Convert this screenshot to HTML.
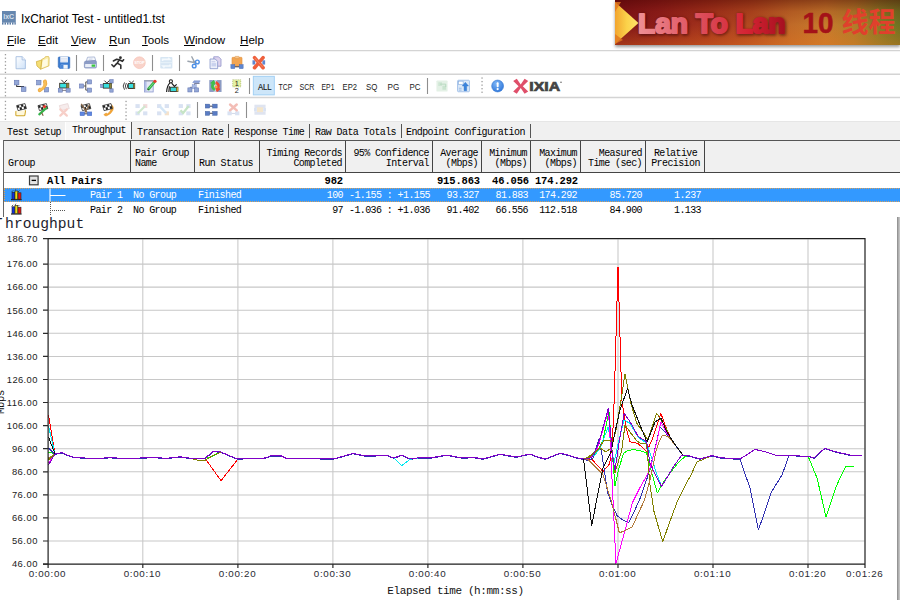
<!DOCTYPE html>
<html lang="en">
<head>
<meta charset="utf-8">
<title>IxChariot Test - untitled1.tst</title>
<style>
html,body{margin:0;padding:0;}
body{width:900px;height:600px;overflow:hidden;background:#fff;position:relative;font-family:"Liberation Sans",sans-serif;color:#000;}
.abs{position:absolute;}
.mono{font-family:"Liberation Mono","Noto Sans CJK SC",monospace;}
#title{left:21px;top:10.5px;font-size:11.9px;line-height:16px;white-space:nowrap;color:#000;}
#menu{left:0;top:30px;height:20px;width:900px;}
#menu span{position:absolute;top:2px;font-size:11.6px;line-height:16px;white-space:nowrap;}
#menu u{text-decoration:underline;text-underline-offset:1px;}
#tabs{left:0;top:122px;width:900px;height:18px;background:#f0f0f0;}
.tab{position:absolute;top:5px;font-size:10px;letter-spacing:-0.6px;line-height:12px;white-space:nowrap;}
.tsep{position:absolute;top:2px;width:1px;height:14px;background:#555;}
#thead{left:4px;top:140px;width:896px;height:33px;background:#f0f0f0;border-top:1px solid #555;border-bottom:1px solid #444;box-sizing:border-box;}
.hc{position:absolute;top:0;height:32px;border-right:1.5px solid #444;box-sizing:border-box;font-size:10px;letter-spacing:-0.6px;line-height:10px;white-space:nowrap;}
.hc div{position:absolute;left:4px;right:3px;bottom:4px;}
.hc.r div{text-align:right;}
.hc.c div{text-align:center;}
.row{position:absolute;left:4px;width:896px;font-size:10px;letter-spacing:-0.6px;line-height:14.5px;white-space:nowrap;}
.row span{position:absolute;top:0;}
.row .r{text-align:right;}
.bold{font-weight:bold;}
</style>
</head>
<body>
<!-- title bar -->
<svg class="abs" style="left:2px;top:11px" width="14" height="14" viewBox="0 0 14 14">
 <rect x="0" y="0" width="13.800" height="11.600" fill="#6687af"/>
 <g fill="#5d7ea8"><rect x="0" y="11.400" width="1.500" height="2.200"/><rect x="2.500" y="11.400" width="1.500" height="2.200"/><rect x="5" y="11.400" width="1.500" height="2.200"/><rect x="7.500" y="11.400" width="1.500" height="2.200"/><rect x="10" y="11.400" width="1.500" height="2.200"/><rect x="12.400" y="11.400" width="1.400" height="2.200"/></g>
 <text x="1.200" y="8" font-family="Liberation Sans, sans-serif" font-size="7.600" font-weight="bold" fill="#d6e0ec" textLength="11" lengthAdjust="spacingAndGlyphs">IxC</text>
</svg>
<div id="title" class="abs">IxChariot Test - untitled1.tst</div>

<!-- menu bar -->
<div id="menu" class="abs">
 <span style="left:7px"><u>F</u>ile</span>
 <span style="left:38px"><u>E</u>dit</span>
 <span style="left:71px"><u>V</u>iew</span>
 <span style="left:109px"><u>R</u>un</span>
 <span style="left:142px"><u>T</u>ools</span>
 <span style="left:184px"><u>W</u>indow</span>
 <span style="left:240px"><u>H</u>elp</span>
</div>

<!-- TOOLBARS -->
<!--TB-START-->
<svg id="tb" class="abs" style="left:0;top:50px" width="900" height="73" viewBox="0 50 900 73">
<defs><linearGradient id="gp" x1="0" y1="0" x2="1" y2="1"><stop offset="0" stop-color="#ffffff"/><stop offset="1" stop-color="#cfe2f8"/></linearGradient><radialGradient id="gi" cx=".4" cy=".3" r=".8"><stop offset="0" stop-color="#7db6f6"/><stop offset="1" stop-color="#2a72d8"/></radialGradient></defs>
<path d="M0 50.500H900M0 74.300H900M0 97.500H900" stroke="#d4d4d4" stroke-width="1.400"/><path d="M0 121.500H900" stroke="#e6e6e6" stroke-width="1.200"/>
<rect x="4.8" y="54.00" width="1.300" height="1.300" fill="#9c9c9c"/><rect x="4.8" y="57.55" width="1.300" height="1.300" fill="#9c9c9c"/><rect x="4.8" y="61.10" width="1.300" height="1.300" fill="#9c9c9c"/><rect x="4.8" y="64.65" width="1.300" height="1.300" fill="#9c9c9c"/><rect x="4.8" y="68.20" width="1.300" height="1.300" fill="#9c9c9c"/><rect x="4.8" y="71.75" width="1.300" height="1.300" fill="#9c9c9c"/><rect x="4.8" y="77.40" width="1.300" height="1.300" fill="#9c9c9c"/><rect x="4.8" y="80.95" width="1.300" height="1.300" fill="#9c9c9c"/><rect x="4.8" y="84.50" width="1.300" height="1.300" fill="#9c9c9c"/><rect x="4.8" y="88.05" width="1.300" height="1.300" fill="#9c9c9c"/><rect x="4.8" y="91.60" width="1.300" height="1.300" fill="#9c9c9c"/><rect x="4.8" y="95.15" width="1.300" height="1.300" fill="#9c9c9c"/><rect x="4.8" y="100.80" width="1.300" height="1.300" fill="#9c9c9c"/><rect x="4.8" y="104.35" width="1.300" height="1.300" fill="#9c9c9c"/><rect x="4.8" y="107.90" width="1.300" height="1.300" fill="#9c9c9c"/><rect x="4.8" y="111.45" width="1.300" height="1.300" fill="#9c9c9c"/><rect x="4.8" y="115.00" width="1.300" height="1.300" fill="#9c9c9c"/><rect x="4.8" y="118.55" width="1.300" height="1.300" fill="#9c9c9c"/><rect x="125.4" y="100.80" width="1.300" height="1.300" fill="#9c9c9c"/><rect x="125.4" y="104.35" width="1.300" height="1.300" fill="#9c9c9c"/><rect x="125.4" y="107.90" width="1.300" height="1.300" fill="#9c9c9c"/><rect x="125.4" y="111.45" width="1.300" height="1.300" fill="#9c9c9c"/><rect x="125.4" y="115.00" width="1.300" height="1.300" fill="#9c9c9c"/><rect x="125.4" y="118.55" width="1.300" height="1.300" fill="#9c9c9c"/><rect x="481.4" y="77.40" width="1.300" height="1.300" fill="#9c9c9c"/><rect x="481.4" y="80.95" width="1.300" height="1.300" fill="#9c9c9c"/><rect x="481.4" y="84.50" width="1.300" height="1.300" fill="#9c9c9c"/><rect x="481.4" y="88.05" width="1.300" height="1.300" fill="#9c9c9c"/><rect x="481.4" y="91.60" width="1.300" height="1.300" fill="#9c9c9c"/>
<path d="M76.5 55V71" stroke="#8e8e8e" stroke-width="1.100"/>
<path d="M103.5 55V71" stroke="#8e8e8e" stroke-width="1.100"/>
<path d="M152.5 55V71" stroke="#8e8e8e" stroke-width="1.100"/>
<path d="M179.5 55V71" stroke="#8e8e8e" stroke-width="1.100"/>
<path d="M249.5 78V94" stroke="#8e8e8e" stroke-width="1.100"/>
<path d="M427.5 78V94" stroke="#8e8e8e" stroke-width="1.100"/>
<path d="M197.5 102V118" stroke="#8e8e8e" stroke-width="1.100"/>
<path d="M246.5 102V118" stroke="#8e8e8e" stroke-width="1.100"/>
<g transform="translate(14.2 56.2) scale(0.93)"><path d="M2 .5h6.5l3.5 3.5v9.5H2z" fill="url(#gp)" stroke="#9fb9dd" stroke-width=".9"/><path d="M8.5 .5v3.5H12" fill="#e9f1fb" stroke="#9fb9dd" stroke-width=".8"/></g>
<g transform="translate(36.0 56.2) scale(0.93)"><path d="M6.200 3.400L9.400 1.900L10.100 .5L13.500 .4L14.100 1.900L13.900 10.400L5 14z" fill="#fbefac" stroke="#d6b546" stroke-width=".8" stroke-linejoin="round"/><path d="M7.400 4.600L12.600 2.600L12.400 10L6 12.600z" fill="#fffbe2"/><path d="M.4 5.800L6.300 4.100L5 14L1 10.500z" fill="#f5de74" stroke="#d0ae3e" stroke-width=".8" stroke-linejoin="round"/></g>
<g transform="translate(57.5 56.2) scale(0.93)"><path d="M.8 1.800q0-1 1-1h10.400q1 0 1 1v10.400q0 1-1 1H2.500L.8 11.600z" fill="#3b7bd0" stroke="#2c62b0" stroke-width=".6"/><rect x="3" y=".7" width="8.200" height="6" fill="#f4f7fc"/><path d="M3.600 2.400h7M3.600 4h7M3.600 5.600h7" stroke="#c8d4e8" stroke-width=".6"/><rect x="3.600" y="9.200" width="7.400" height="4.300" fill="#eef3fa"/><rect x="3.600" y="9.200" width="2.800" height="4.300" fill="#4a86d6"/></g>
<g transform="translate(83.8 56.2) scale(0.93)"><path d="M2.600 5.800L4 1.100L11.600 .8L12.800 4.600z" fill="#f6f8fc" stroke="#9aa8cc" stroke-width=".8" stroke-linejoin="round"/><path d="M5.400 3.200l4-.2" stroke="#b8c4e0" stroke-width=".8"/><path d="M.6 7q0-1.600 1.600-1.800L12 4.600q1.600 0 1.600 1.600v5.200q0 1.400-1.400 1.400H2q-1.400 0-1.400-1.400z" fill="#8c9cc6" stroke="#7484b4" stroke-width=".6"/><rect x="1.400" y="8.400" width="11.400" height="3.600" rx=".6" fill="#e9eef8"/><rect x="8.400" y="8.900" width="3.800" height="2.500" fill="#3cc640"/></g>
<g transform="translate(111.5 56.2) scale(0.93)"><circle cx="9.6" cy="1.6" r="1.500" fill="#2e2e2e"/><path d="M2.0 5.1 L5.5 3.3 L8.4 3.8 L11.7 5.5 L13.0 3.8M8.4 3.8 L6.2 7.5 L10.0 9.6 L10.0 13.3M6.2 7.5 L5.5 8.0 L2.5 11.3 L0.4 9.2" fill="none" stroke="#2e2e2e" stroke-width="1.700" stroke-linecap="round" stroke-linejoin="round"/></g>
<g transform="translate(132.9 56.2) scale(0.93)"><circle cx="7" cy="7" r="6.3" fill="#f9d3ca" stroke="#f6c4b8" stroke-width=".8"/><text x="7" y="8.6" font-size="4.4" font-weight="bold" text-anchor="middle" fill="#fff" font-family="Liberation Sans,sans-serif" letter-spacing="-.2">STOP</text></g>
<g transform="translate(159.8 56.2) scale(0.93)"><rect x=".5" y=".8" width="13" height="12.4" rx="1" fill="#d7e6f3"/><path d="M3 5.2V3.4h7.6L9 1.8M11 8.8v1.8H3.4L5 12.2" fill="none" stroke="#f4f9fd" stroke-width="1.7"/><path d="M.5 7h13" stroke="#e9f2fa" stroke-width="1"/></g>
<g transform="translate(187.5 56.2) scale(0.93)"><path d="M4.6 .6L8.4 8.2M.4 5.4L8.6 7" stroke="#9aa3ad" stroke-width="1.5" stroke-linecap="round"/><circle cx="10.6" cy="6.2" r="2" fill="none" stroke="#4c8fe6" stroke-width="1.5"/><circle cx="7.2" cy="10.6" r="2" fill="none" stroke="#4c8fe6" stroke-width="1.5"/></g>
<g transform="translate(209.1 56.2) scale(0.93)"><path d="M5 .6h5.2l2.6 2.6v7.6H5z" fill="#ddd3ee" stroke="#8b8fc6" stroke-width=".8"/><path d="M1 3h5.6l2.6 2.6v7.8H1z" fill="#eef0fa" stroke="#7f8fc6" stroke-width=".8"/><rect x="2.6" y="7.4" width="5" height="3.6" fill="#c9d2ee"/><path d="M2.6 6h4" stroke="#a9b5de" stroke-width=".7"/></g>
<g transform="translate(230.5 56.2) scale(0.93)"><rect x="1.6" y="1.2" width="10.8" height="9.6" rx=".8" fill="#f2a552" stroke="#e08f3a" stroke-width=".6"/><rect x="4.8" y=".2" width="4.4" height="2.4" rx=".6" fill="#f7c58c" stroke="#d98a38" stroke-width=".5"/><path d="M4 11.4h6" stroke="#334" stroke-width="1"/><rect x=".4" y="9" width="4.2" height="4.4" fill="#5f86cf" stroke="#496fb8" stroke-width=".5"/><rect x="9.4" y="9" width="4.2" height="4.4" fill="#5f86cf" stroke="#496fb8" stroke-width=".5"/></g>
<g transform="translate(252.3 56.2) scale(0.93)"><rect x=".2" y="4.4" width="3" height="4.6" fill="#5f86cf"/><rect x="10.8" y="4.4" width="3" height="4.6" fill="#5f86cf"/><path d="M2.4 1.6L11.6 12.4M11.6 1.6L2.4 12.4" stroke="#ee5f3c" stroke-width="3.8" stroke-linecap="round"/><path d="M3 2.2L11 11.6" stroke="#f58a66" stroke-width="1" stroke-linecap="round"/></g>
<g transform="translate(13.9 79.5) scale(0.93)"><path d="M3 5.4v2.2h7.4V9" fill="none" stroke="#333" stroke-width="1.1"/><rect x=".4" y=".8" width="5" height="5" fill="#93a7d6" stroke="#6274b2" stroke-width=".6"/><rect x="8" y="8" width="5" height="5" fill="#93a7d6" stroke="#6274b2" stroke-width=".6"/></g>
<g transform="translate(36.0 79.5) scale(0.93)"><rect x=".6" y=".8" width="4.800" height="5" fill="#93a7d6" stroke="#6274b2" stroke-width=".6"/><rect x="9" y="8.600" width="4.600" height="4.800" fill="#93a7d6" stroke="#6274b2" stroke-width=".6"/><path d="M9.600 2.200Q11.400 6.800 4 11.400" fill="none" stroke="#eda63a" stroke-width="4.200" stroke-linecap="round"/><path d="M9.600 2.200Q11.400 6.800 4 11.400" fill="none" stroke="#f7bd58" stroke-width="2.800" stroke-linecap="round"/><path d="M6.800 3.600Q8 6.400 4.600 8.800" fill="none" stroke="#fff" stroke-width="1.600"/></g>
<g transform="translate(57.7 79.5) scale(0.93)"><path d="M4 .4L7 3.600 10 .4" fill="none" stroke="#222" stroke-width="1"/><rect x="1.600" y="3.600" width="10.800" height="6" fill="#3a3a30" /><rect x="9.400" y="4.200" width="2.600" height="4.800" fill="#8a8440"/><rect x="2.600" y="4.600" width="6.400" height="4" fill="#38e0e0"/><rect x=".6" y="9.800" width="4.400" height="3.800" fill="#93a7d6" stroke="#6274b2" stroke-width=".6"/><rect x="9" y="9.800" width="4.400" height="3.800" fill="#93a7d6" stroke="#6274b2" stroke-width=".6"/><path d="M5 11.700h4" stroke="#556" stroke-width=".8"/></g>
<g transform="translate(79.1 79.5) scale(0.93)"><path d="M4.800 7h2.400M10 2.600H7.200v8.800H10" fill="none" stroke="#444" stroke-width="1"/><rect x=".4" y="4.800" width="4.400" height="4.400" fill="#93a7d6" stroke="#6274b2" stroke-width=".6"/><rect x="9" y=".4" width="4.400" height="4.400" fill="#93a7d6" stroke="#6274b2" stroke-width=".6"/><rect x="9" y="9.200" width="4.400" height="4.400" fill="#93a7d6" stroke="#6274b2" stroke-width=".6"/></g>
<g transform="translate(100.5 79.5) scale(0.93)"><rect x="10" y=".2" width="3.600" height="3.600" fill="#93a7d6" stroke="#6274b2" stroke-width=".6"/><rect x="10" y="10" width="3.600" height="3.600" fill="#93a7d6" stroke="#6274b2" stroke-width=".6"/><rect x=".2" y="5.200" width="2.800" height="3.600" fill="#93a7d6" stroke="#6274b2" stroke-width=".6"/><path d="M4.200 1.200L6.800 3.800 9.600 1.200" fill="none" stroke="#222" stroke-width="1"/><rect x="2.600" y="3.800" width="9.600" height="6" fill="#3a3a30"/><rect x="9.600" y="4.400" width="2.200" height="4.800" fill="#8a8440"/><rect x="3.400" y="4.800" width="5.800" height="4" fill="#38e0e0"/></g>
<g transform="translate(122.1 79.5) scale(0.93)"><path d="M2.600 3.200Q-.2 7 2.600 11M4.600 3.800Q2.400 7 4.600 10.400M6.400 4.600Q5 7 6.400 9.600" fill="none" stroke="#222" stroke-width=".9"/><path d="M7.600 1.400L10 3.800 12.600 1.400" fill="none" stroke="#222" stroke-width="1"/><rect x="6.400" y="3.800" width="7.600" height="6.400" fill="#3a3a30"/><rect x="12.200" y="4.400" width="1.500" height="5.200" fill="#8a8440"/><rect x="7.200" y="4.800" width="4.600" height="4.200" fill="#38e0e0"/></g>
<g transform="translate(143.5 79.5) scale(0.93)"><rect x="1" y="1.200" width="9.400" height="12.200" fill="#e4e7f6" stroke="#8f9cd0" stroke-width=".9"/><rect x="1.500" y="1.600" width="1.800" height="11.400" fill="#b4bfe6"/><rect x="1" y=".6" width="9.400" height="1.600" fill="#9a9fb2"/><path d="M5.400 10.200L11.200 3.400" stroke="#35b34a" stroke-width="3" stroke-linecap="round"/><path d="M5.800 9.600L11 3.600" stroke="#7fdc86" stroke-width="1" stroke-linecap="round"/><circle cx="12.300" cy="2" r="1.800" fill="#e63b2e"/><path d="M4.200 11.600l.6-2 1.400 1.200z" fill="#333"/></g>
<g transform="translate(165.5 79.5) scale(0.93)"><circle cx="5.800" cy="2" r="1.700" fill="#fff" stroke="#1a1a1a" stroke-width="1.100"/><path d="M4.800 3.600Q1.600 6.400 1.200 13.400M6.600 3.800l3 3.600 2.400-2.200M4.200 7.200L3.600 13.400" fill="none" stroke="#1a1a1a" stroke-width="1.250"/><rect x="4.800" y="7.800" width="9" height="5.600" fill="#3a3a30"/><rect x="12" y="8.400" width="1.500" height="4.400" fill="#c9b23c"/><rect x="5.600" y="8.800" width="5.800" height="3.600" fill="#38d8d8"/></g>
<g transform="translate(187.5 79.5) scale(0.93)"><path d="M3 11V8.400h4.600V4.200H13" fill="none" stroke="#666c88" stroke-width="1"/><rect x=".4" y="9" width="4.400" height="4.400" fill="#93a7d6" stroke="#6274b2" stroke-width=".6"/><rect x="5" y="5.600" width="4.400" height="4.400" fill="#a9b9e2" stroke="#7d92cc" stroke-width=".5"/><rect x="7.600" y="9" width="4.400" height="4.400" fill="#93a7d6" stroke="#6274b2" stroke-width=".6"/><path d="M5.600 3.400L7 1.400h6.600L12.400 3.400z" fill="#8ea3d8" stroke="#6f86c6" stroke-width=".5"/></g>
<g transform="translate(208.9 79.5) scale(0.93)"><rect x=".4" y=".6" width="13.200" height="12.800" fill="#8c9cc4"/><rect x="5.200" y=".6" width="3.600" height="12.800" fill="#c9d0e2"/><path d="M5.800 11.800Q1.200 9 3.600 4.200L2 3.800 5.400 1l1.200 4.200-1.400-.4Q3.800 8 6.600 10z" fill="#3fc04a" stroke="#3fc04a" stroke-width="1" stroke-linejoin="round"/><path d="M8.200 2.200Q12.800 5 10.400 9.800l1.600.4-3.400 2.800-1.200-4.200 1.400.4Q10.200 6 7.400 4z" fill="#f0482e" stroke="#f0482e" stroke-width="1" stroke-linejoin="round"/><circle cx="7.800" cy="8" r="1.500" fill="#f6a23a"/></g>
<g transform="translate(230.5 79.5) scale(0.93)"><rect x="2.400" y=".3" width="8.600" height="7.600" fill="#e4f2a4" stroke="#8a9a3a" stroke-width=".6" stroke-dasharray="1 1"/><text x="6.800" y="7" font-size="7.800" text-anchor="middle" fill="#222" font-family="Liberation Sans,sans-serif">1</text><text x="6.800" y="14.200" font-size="7.800" text-anchor="middle" fill="#222" font-family="Liberation Sans,sans-serif">2</text></g>
<g transform="translate(435.5 79.5) scale(0.93)"><rect x="1" y="1" width="12" height="12" rx="1" fill="#e4f1e6"/><rect x="3" y="3" width="4" height="4" fill="#cfe6d4"/><rect x="7.400" y="6.600" width="4" height="4.400" fill="#c9e4cf"/><path d="M5 5h6v3" stroke="#b5d8bd" fill="none"/></g>
<g transform="translate(457.0 79.5) scale(0.93)"><rect x=".6" y=".8" width="12.800" height="12.400" rx="1" fill="#dbe9f8" stroke="#8db4e4" stroke-width=".8"/><rect x="1.600" y="1.800" width="5" height="3.600" fill="#fff" stroke="#7aa4dc" stroke-width=".6"/><path d="M9 3l3.400 4h-2v5H7.600V7h-2z" fill="#3b84dc" stroke="#2a6cc4" stroke-width=".4"/><path d="M2 9.400h3M2 11.400h3" stroke="#8db4e4" stroke-width=".9"/></g>
<g transform="translate(491.1 79.5) scale(0.93)"><circle cx="7" cy="7" r="6.400" fill="url(#gi)" stroke="#2f74d0" stroke-width=".6"/><rect x="6" y="3" width="2.100" height="5.200" rx=".9" fill="#fff"/><circle cx="7.050" cy="10.300" r="1.250" fill="#fff"/></g>
<g transform="translate(15.1 103.2) scale(0.93)"><path d="M1.600 2.600L10.600 .4l1.600 5.400-9 2.200z" fill="#fafafa" stroke="#222" stroke-width=".8"/><path d="M1.800 2.700l2.200-.5.700 2.500-2.200.55zM6.200 1.600l2.200-.55.7 2.600L6.900 4.200zM4.700 4.700l2.200-.55.7 2.500-2.200.55zM9.100 3.650l2.200-.55.75 2.500-2.200.55z" fill="#222"/><path d="M1.400 8.600q-.6 0-.6.800v3.400q0 .8.800.8h8q.8 0 .9-.7l.7-4.500q0-.6-.7-.6" fill="#fff8dc" stroke="#d0a628" stroke-width="1.100"/></g>
<g transform="translate(36.5 103.2) scale(0.93)"><path d="M1.600 2.600L10.600 .4l1.600 5.400-9 2.200z" fill="#fafafa" stroke="#222" stroke-width=".8"/><path d="M1.800 2.700l2.200-.5.700 2.500-2.200.55zM6.200 1.600l2.200-.55.7 2.600L6.900 4.200zM4.700 4.700l2.200-.55.7 2.500-2.200.55zM9.100 3.650l2.200-.55.75 2.500-2.200.55z" fill="#222"/><path d="M3 12L10.600 5" stroke="#35b34a" stroke-width="2.300" stroke-linecap="round"/><circle cx="8.600" cy="3.600" r="1.700" fill="#e63b2e"/><path d="M5.600 10.400l1.600 3.200" stroke="#7a5a3a" stroke-width="1.200"/></g>
<g transform="translate(57.9 103.2) scale(0.93)"><path d="M1.600 2.600L10.600 .4l1.600 5.400-9 2.200z" fill="#f6ecec" stroke="#e6d2d2" stroke-width=".8"/><path d="M2.600 6.600L9.600 13.400M9.600 6.600L2.600 13.400" stroke="#f7cfc8" stroke-width="2.400" stroke-linecap="round"/></g>
<g transform="translate(79.5 103.2) scale(0.93)"><path d="M1.600 2.600L10.600 .4l1.600 5.400-9 2.200z" fill="#fafafa" stroke="#222" stroke-width=".8"/><path d="M1.800 2.700l2.200-.5.700 2.500-2.200.55zM6.200 1.600l2.200-.55.7 2.600L6.900 4.200zM4.700 4.700l2.200-.55.7 2.500-2.200.55zM9.100 3.650l2.200-.55.75 2.500-2.200.55z" fill="#222"/><path d="M1.800 .8L8.200 10.200M10.800 1.600L5.600 10.200" stroke="#8a6a4a" stroke-width="1.300"/><rect x=".6" y="9.400" width="4.800" height="4" fill="#5f86e0" stroke="#3f66c0" stroke-width=".5"/><rect x="8.400" y="9.400" width="4.800" height="4" fill="#5f86e0" stroke="#3f66c0" stroke-width=".5"/><path d="M5.400 11.400h3" stroke="#223" stroke-width=".9"/></g>
<g transform="translate(101.1 103.2) scale(0.93)"><path d="M11.400 1.600q2.800 2.400 1.400 5.800Q11 11.600 6 13.600q-2.400.4-3-1.400l2.400-1.600 1.400.8q3-2 3.800-4.600L9.600 4.600z" fill="#f5a838" stroke="#e08f22" stroke-width=".5"/><path d="M1.600 2.600L10.600 .4l1.600 5.400-9 2.200z" fill="#fafafa" stroke="#222" stroke-width=".8"/><path d="M1.800 2.700l2.200-.5.700 2.500-2.200.55zM6.200 1.600l2.200-.55.7 2.600L6.900 4.200zM4.700 4.700l2.200-.55.7 2.500-2.200.55zM9.100 3.650l2.200-.55.75 2.500-2.200.55z" fill="#222"/></g>
<g transform="translate(134.9 103.2) scale(0.93)"><rect x=".6" y="1" width="4.600" height="4.200" fill="#d9e2f2"/><rect x="8.800" y="1" width="4.600" height="4.200" fill="#f3dada"/><rect x=".6" y="8.800" width="4.600" height="4.200" fill="#d9e2f2"/><rect x="8.800" y="8.800" width="4.600" height="4.200" fill="#d9e2f2"/><path d="M3 11L11 3" stroke="#cfe8cf" stroke-width="2.200"/></g>
<g transform="translate(156.5 103.2) scale(0.93)"><rect x=".6" y="1" width="4.600" height="4.200" fill="#d9e2f2"/><rect x="8.800" y="1" width="4.600" height="4.200" fill="#d9e2f2"/><rect x=".6" y="8.800" width="4.600" height="4.200" fill="#d9e2f2"/><rect x="8.800" y="8.800" width="4.600" height="4.200" fill="#f5e2cc"/><path d="M3.600 3.400L10.400 10.600" stroke="#d4e6f6" stroke-width="2.600"/></g>
<g transform="translate(178.1 103.2) scale(0.93)"><rect x=".6" y="1" width="4.600" height="4.200" fill="#d9e2f2"/><rect x="8.800" y="1" width="4.600" height="4.200" fill="#d9e2f2"/><rect x=".6" y="8.800" width="4.600" height="4.200" fill="#d9e2f2"/><rect x="8.800" y="8.800" width="4.600" height="4.200" fill="#d9e2f2"/><path d="M2.600 7.600l2.800 3L11.400 3" fill="none" stroke="#c6e4c6" stroke-width="2.400"/></g>
<g transform="translate(204.7 103.2) scale(0.93)"><path d="M5 3.200h4M5 10.800h4" stroke="#334" stroke-width="1"/><rect x=".6" y="1" width="4.800" height="4.200" fill="#5a7cc4" stroke="#41609f" stroke-width=".5"/><rect x="8.600" y="1" width="4.800" height="4.200" fill="#5a7cc4" stroke="#41609f" stroke-width=".5"/><rect x=".6" y="8.800" width="4.800" height="4.200" fill="#5a7cc4" stroke="#41609f" stroke-width=".5"/><rect x="8.600" y="8.800" width="4.800" height="4.200" fill="#5a7cc4" stroke="#41609f" stroke-width=".5"/></g>
<g transform="translate(226.9 103.2) scale(0.93)"><rect x=".6" y="8.800" width="4.600" height="4.200" fill="#d9e2f2"/><rect x="8.800" y="8.800" width="4.600" height="4.200" fill="#d9e2f2"/><path d="M5 11h4" stroke="#cfd6e6"/><path d="M3.400 1.400l7.200 6.400M10.600 1.400L3.400 7.800" stroke="#f3bdb6" stroke-width="2.600" stroke-linecap="round"/></g>
<g transform="translate(253.5 103.2) scale(0.93)"><rect x="1" y="1.600" width="12" height="3.600" fill="#dfe4f0"/><rect x="1" y="8.800" width="12" height="3.600" fill="#dfe4f0"/><rect x="3.800" y="4.400" width="6.400" height="5.200" fill="#f4e6cc"/><rect x=".6" y="5.200" width="3" height="3.600" fill="#d9e2f2"/><rect x="10.400" y="5.200" width="3" height="3.600" fill="#d9e2f2"/></g>
<rect x="253.300" y="76.300" width="21" height="18.600" fill="#cde6f9" stroke="#9ccdf4" stroke-width=".9"/>
<g font-family="Liberation Sans,sans-serif" font-size="9" fill="#1a1a1a">
<text x="258" y="90.200" textLength="13.6" lengthAdjust="spacingAndGlyphs" stroke="#1a1a1a" stroke-width=".2">ALL</text>
<text x="278.6" y="90.200" textLength="13.8" lengthAdjust="spacingAndGlyphs">TCP</text>
<text x="299.4" y="90.200" textLength="15.0" lengthAdjust="spacingAndGlyphs">SCR</text>
<text x="321.6" y="90.200" textLength="12.8" lengthAdjust="spacingAndGlyphs">EP1</text>
<text x="342.6" y="90.200" textLength="14.4" lengthAdjust="spacingAndGlyphs">EP2</text>
<text x="366" y="90.200" textLength="11.4" lengthAdjust="spacingAndGlyphs">SQ</text>
<text x="387.6" y="90.200" textLength="11.8" lengthAdjust="spacingAndGlyphs">PG</text>
<text x="409.6" y="90.200" textLength="11.0" lengthAdjust="spacingAndGlyphs">PC</text>
</g>
<path d="M513.200 81L516.800 78.800L520.700 84.500L524.600 78.800L528.200 81L522.800 86.300L528.200 91.600L524.600 93.800L520.700 88.100L516.800 93.800L513.200 91.600L518.600 86.300z" fill="#df4f6a"/>
<text x="529.300" y="91.100" font-family="Liberation Sans,sans-serif" font-weight="bold" font-size="13.300" fill="#444" textLength="30.800" lengthAdjust="spacingAndGlyphs" stroke="#444" stroke-width=".7">IXIA</text><circle cx="561" cy="82.300" r=".8" fill="#666"/>
</svg>
<!--TB-END-->

<!-- tabs -->
<div id="tabs" class="abs mono">
 <i class="abs" style="left:65px;top:0;width:66px;height:18px;background:#f8f8f8;border-left:1px solid #fff;box-sizing:border-box"></i>
 <span class="tab" style="left:7px">Test Setup</span>
 <span class="tab" style="left:72px;top:3px">Throughput</span>
 <span class="tab" style="left:137px">Transaction Rate</span>
 <span class="tab" style="left:234px">Response Time</span>
 <span class="tab" style="left:315px">Raw Data Totals</span>
 <span class="tab" style="left:406px">Endpoint Configuration</span>
 <i class="tsep" style="left:131px;top:0;height:17px"></i>
 <i class="tsep" style="left:228px"></i>
 <i class="tsep" style="left:309px"></i>
 <i class="tsep" style="left:401px"></i>
 <i class="tsep" style="left:530px"></i>
</div>

<!-- table header -->
<div id="thead" class="abs mono">
 <div class="hc" style="left:0;width:127px"><div>Group</div></div>
 <div class="hc" style="left:127px;width:64px"><div>Pair Group<br>Name</div></div>
 <div class="hc" style="left:191px;width:65px"><div>Run Status</div></div>
 <div class="hc r" style="left:256px;width:86px"><div>Timing Records<br>Completed</div></div>
 <div class="hc r" style="left:342px;width:87px"><div>95% Confidence<br>Interval</div></div>
 <div class="hc r" style="left:429px;width:49px"><div>Average<br>(Mbps)</div></div>
 <div class="hc r" style="left:478px;width:49px"><div>Minimum<br>(Mbps)</div></div>
 <div class="hc r" style="left:527px;width:50px"><div>Maximum<br>(Mbps)</div></div>
 <div class="hc r" style="left:577px;width:65px"><div>Measured<br>Time (sec)</div></div>
 <div class="hc c" style="left:642px;width:59px"><div>Relative<br>Precision</div></div>
</div>
<div class="abs" style="left:3px;top:140px;width:1px;height:77px;background:#666"></div>

<!-- rows -->
<div class="row mono bold" style="top:173.5px;height:14px;font-size:10.5px;letter-spacing:-0.15px">
 <span style="left:43px">All Pairs</span>
 <span class="r" style="left:256px;width:83px">982</span>
 <span class="r" style="left:429px;width:47px">915.863</span>
 <span class="r" style="left:478px;width:47px">46.056</span>
 <span class="r" style="left:527px;width:47px">174.292</span>
</div>
<div class="row mono" style="top:188.4px;height:13.2px;line-height:15.5px;width:899px;background:#3399ff;color:#fff;outline:1px dotted #d9a05a;outline-offset:-1px">
 <span style="left:86px">Pair 1</span>
 <span style="left:129px">No Group</span>
 <span style="left:194px">Finished</span>
 <span class="r" style="left:256px;width:83px">100</span>
 <span class="r" style="left:342px;width:84px">-1.155 : +1.155</span>
 <span class="r" style="left:429px;width:46px">93.327</span>
 <span class="r" style="left:478px;width:46px">81.883</span>
 <span class="r" style="left:527px;width:46px">174.292</span>
 <span class="r" style="left:577px;width:61px">85.720</span>
 <span class="r" style="left:642px;width:55px">1.237</span>
</div>
<div class="row mono" style="top:202.5px;height:14px;line-height:15px">
 <span style="left:86px">Pair 2</span>
 <span style="left:129px">No Group</span>
 <span style="left:194px">Finished</span>
 <span class="r" style="left:256px;width:83px">97</span>
 <span class="r" style="left:342px;width:84px">-1.036 : +1.036</span>
 <span class="r" style="left:429px;width:46px">91.402</span>
 <span class="r" style="left:478px;width:46px">66.556</span>
 <span class="r" style="left:527px;width:46px">112.518</span>
 <span class="r" style="left:577px;width:61px">84.900</span>
 <span class="r" style="left:642px;width:55px">1.133</span>
</div>


<!-- banner -->
<div class="abs" id="banner" style="left:615px;top:0;width:285px;height:45px;box-shadow:0 2px 3px rgba(0,0,0,.4);background:linear-gradient(90deg,#7a1216 0%,#8e1e1a 15%,#a2321c 32%,#b24a20 48%,#c06a28 62%,#c67a2c 74%,#b07c2a 84%,#857a26 93%,#6c7222 100%);overflow:hidden;">
 <div class="abs" style="left:0;top:0;width:285px;height:45px;background:linear-gradient(180deg,rgba(70,0,0,.45) 0%,rgba(90,0,0,.15) 25%,rgba(0,0,0,0) 55%,rgba(235,120,30,.35) 100%)"></div>
 <svg class="abs" style="left:0;top:0" width="285" height="45" viewBox="0 0 285 45">
  <defs><linearGradient id="gt" x1="0" y1="0" x2="1" y2="0"><stop offset="0" stop-color="#f2a42e"/><stop offset=".5" stop-color="#fbd24a"/><stop offset="1" stop-color="#ffe36a"/></linearGradient>
  <linearGradient id="gl" x1="0" y1="0" x2="1" y2="0"><stop offset="0" stop-color="#ee8f94"/><stop offset=".3" stop-color="#e2606c"/><stop offset=".55" stop-color="#d83c4a"/><stop offset=".75" stop-color="#d42232"/><stop offset="1" stop-color="#a51020"/></linearGradient>
  <filter id="sh" x="-5%" y="-20%" width="110%" height="150%"><feGaussianBlur stdDeviation="1.600"/></filter></defs>
  <path d="M0 2L23.500 23L0 44z" fill="url(#gt)"/>
  <path d="M0 2L6 2L0 12zM0 44L0 34L8 40z" fill="#e0761e" opacity=".8"/>
  <g font-family="Liberation Sans, Noto Sans CJK SC, sans-serif" font-weight="bold">
   <text x="24" y="33.600" font-size="28.500" fill="#3a0608" stroke="#3a0608" stroke-width="3" opacity=".6" filter="url(#sh)" textLength="147.500" lengthAdjust="spacingAndGlyphs">Lan To Lan</text>
   <text x="23" y="32.600" font-size="28.500" fill="url(#gl)" stroke="url(#gl)" stroke-width="2.200" stroke-linejoin="round" textLength="147.500" lengthAdjust="spacingAndGlyphs">Lan To Lan</text>
   <text x="187.500" y="33.300" font-size="29.500" fill="#a41218" stroke="#a41218" stroke-width=".5" textLength="31" lengthAdjust="spacingAndGlyphs">10</text>
   <text x="226.500" y="32" font-size="27" fill="#e0402c" textLength="54" lengthAdjust="spacingAndGlyphs">线程</text>
  </g>
 </svg>
</div>
<!-- right side panel edge -->
<div class="abs" style="left:896.5px;top:217px;width:3.5px;height:383px;background:linear-gradient(90deg,#868686 0,#a8a8a8 40%,#cdcdcd 100%)"></div>
<!-- tree widgets -->
<svg class="abs" style="left:0;top:173px" width="90" height="45" viewBox="0 173 90 45">
 <rect x="29.500" y="176" width="8.600" height="8.800" fill="#e4e4e4" stroke="#3c3c3c" stroke-width="1.200"/>
 <path d="M31.600 180.400h4.400" stroke="#000" stroke-width="1.300"/>
 <g>
  <path d="M11 199.600h10.600" stroke="#222" stroke-width="1.200"/>
  <rect x="12" y="192.400" width="2.800" height="6.800" fill="#1030e0" stroke="#222" stroke-width=".6"/>
  <rect x="15" y="191" width="2.800" height="8.200" fill="#f0e010" stroke="#222" stroke-width=".6"/>
  <rect x="18" y="192.800" width="3" height="6.400" fill="#e01818" stroke="#222" stroke-width=".6"/>
  <path d="M11.600 192l1.600-1.600M14.800 190.600l1.400-1.200M18 192l1.400-1.400" stroke="#222" stroke-width=".7"/>
 </g>
 <g transform="translate(0 14.400)">
  <path d="M11 199.600h10.600" stroke="#222" stroke-width="1.200"/>
  <rect x="12" y="192.400" width="2.800" height="6.800" fill="#1030e0" stroke="#222" stroke-width=".6"/>
  <rect x="15" y="191" width="2.800" height="8.200" fill="#f0e010" stroke="#222" stroke-width=".6"/>
  <rect x="18" y="192.800" width="3" height="6.400" fill="#e01818" stroke="#222" stroke-width=".6"/>
  <path d="M11.600 192l1.600-1.600M14.800 190.600l1.400-1.200M18 192l1.400-1.400" stroke="#222" stroke-width=".7"/>
 </g>
 <path d="M50 188.500V201.500M50 195.500H65.500" stroke="#fff" stroke-width="1.100" fill="none"/>
 <rect x="50" y="202" width="1" height="1" fill="#555"/><rect x="50" y="204" width="1" height="1" fill="#555"/><rect x="50" y="206" width="1" height="1" fill="#555"/><rect x="50" y="208" width="1" height="1" fill="#555"/><rect x="50" y="210" width="1" height="1" fill="#555"/><rect x="50" y="212" width="1" height="1" fill="#555"/><rect x="50" y="214" width="1" height="1" fill="#555"/><rect x="52" y="210" width="1" height="1" fill="#555"/><rect x="54" y="210" width="1" height="1" fill="#555"/><rect x="56" y="210" width="1" height="1" fill="#555"/><rect x="58" y="210" width="1" height="1" fill="#555"/><rect x="60" y="210" width="1" height="1" fill="#555"/><rect x="62" y="210" width="1" height="1" fill="#555"/><rect x="64" y="210" width="1" height="1" fill="#555"/>
</svg>
<!-- CHART -->
<!--CHART-START-->
<svg id="chart" class="abs" style="left:0;top:214px" width="900" height="386" viewBox="0 214 900 386" font-family="Liberation Mono, monospace">
<path d="M49 541.0H864.5 M49 517.9H864.5 M49 494.9H864.5 M49 471.8H864.5 M49 448.7H864.5 M49 425.6H864.5 M49 402.5H864.5 M49 379.5H864.5 M49 356.4H864.5 M49 333.3H864.5 M49 310.2H864.5 M49 287.1H864.5 M49 264.1H864.5 M142.8 239.5V564 M237.9 239.5V564 M332.9 239.5V564 M427.9 239.5V564 M522.9 239.5V564 M618.0 239.5V564 M713.0 239.5V564 M808.0 239.5V564" stroke="#c8c8c8" stroke-width="1.05" fill="none"/>
<path d="M48.5 415.0 L55.0 454.0 L62.0 452.5 L67.0 455.0 L73.0 457.0 L85.0 458.0 L100.0 458.4 L110.0 457.4 L122.0 458.4 L140.0 458.0 L155.0 457.2 L165.0 458.4 L180.0 456.8 L190.0 458.2 L200.0 458.6 L205.0 458.3 L221.0 480.7 L238.0 459.0 L250.0 458.0 L262.0 458.6 L267.0 457.4 L271.0 455.7 L281.0 455.7 L286.0 458.2 L300.0 458.3 L320.0 458.6 L333.0 459.0 L344.0 456.0 L353.0 453.4 L366.0 456.0 L376.0 455.6 L386.0 455.0 L394.0 458.0 L401.7 455.0 L410.0 459.0 L420.0 457.6 L430.0 458.0 L446.7 455.0 L455.0 456.6 L463.0 458.0 L473.0 457.2 L483.0 459.0 L492.0 456.4 L500.0 454.0 L508.0 455.6 L516.7 457.0 L523.0 455.4 L530.0 454.0 L538.0 457.0 L545.0 459.0 L553.0 456.0 L560.0 453.0 L568.0 455.0 L576.0 457.6 L583.5 459.0 L592.0 459.5 L603.0 471.4 L609.7 463.8 L612.5 440.0 L614.2 400.0 L618.0 266.7 L621.8 400.0 L623.3 410.0 L626.0 428.0 L630.0 441.7 L637.5 443.3 L642.0 447.0 L646.7 451.7 L652.0 440.0 L660.8 413.3 L665.8 426.7 L670.0 436.7 L676.0 446.0 L683.0 455.0 L690.0 456.0 L700.0 459.0 L712.0 455.6 L720.0 457.6 L730.0 458.4 L740.0 459.0 L748.0 454.0 L755.0 449.4 L760.0 450.6 L766.0 452.0 L772.0 454.0 L778.0 456.0 L784.0 455.6 L790.0 455.0 L800.0 456.0 L808.0 456.0 L814.0 458.0 L820.0 452.0 L825.0 448.4 L831.0 450.4 L838.0 452.4 L844.0 453.6 L850.0 455.0 L856.0 455.4 L862.0 455.6" stroke="#ff0000" stroke-width="1" fill="none" stroke-linejoin="bevel" shape-rendering="crispEdges"/>
<path d="M48.5 452.0 L55.0 454.0 L62.0 452.5 L67.0 455.0 L73.0 457.0 L85.0 458.0 L100.0 458.4 L110.0 457.4 L122.0 458.4 L140.0 458.0 L155.0 457.2 L165.0 458.4 L180.0 456.8 L190.0 458.2 L200.0 458.6 L205.0 458.2 L210.0 457.4 L216.0 454.2 L221.0 452.0 L230.0 456.0 L238.0 459.0 L250.0 458.0 L262.0 458.6 L267.0 457.4 L271.0 455.7 L281.0 455.7 L286.0 458.2 L300.0 458.3 L320.0 458.6 L333.0 459.0 L344.0 456.0 L353.0 453.4 L366.0 456.0 L376.0 455.6 L386.0 455.0 L394.0 458.0 L401.7 455.0 L410.0 459.0 L420.0 457.6 L430.0 458.0 L446.7 455.0 L455.0 456.6 L463.0 458.0 L473.0 457.2 L483.0 459.0 L492.0 456.4 L500.0 454.0 L508.0 455.6 L516.7 457.0 L523.0 455.4 L530.0 454.0 L538.0 457.0 L545.0 459.0 L553.0 456.0 L560.0 453.0 L568.0 455.0 L576.0 457.6 L583.5 459.0 L590.0 457.0 L597.0 452.0 L603.0 440.0 L609.0 411.7 L612.0 450.0 L615.0 485.5 L619.0 468.0 L623.7 453.0 L628.0 450.5 L633.5 449.7 L640.0 450.6 L646.5 453.0 L651.0 470.0 L657.3 493.0 L663.0 483.0 L670.3 472.5 L678.0 463.0 L685.5 456.0 L690.0 456.0 L700.0 459.0 L712.0 455.6 L720.0 457.6 L730.0 458.4 L740.0 459.0 L748.0 454.0 L755.0 449.4 L760.0 450.6 L766.0 452.0 L772.0 454.0 L778.0 456.0 L784.0 455.6 L790.0 455.0 L800.0 456.0 L808.0 456.0 L817.0 478.0 L821.0 495.0 L826.0 517.0 L831.0 502.0 L836.0 487.0 L841.0 476.0 L846.0 466.4 L854.0 466.4" stroke="#00ff00" stroke-width="1" fill="none" stroke-linejoin="bevel" shape-rendering="crispEdges"/>
<path d="M48.5 448.0 L55.0 454.4 L62.0 452.9 L67.0 455.4 L73.0 457.4 L85.0 458.4 L100.0 458.8 L110.0 457.8 L122.0 458.8 L140.0 458.4 L155.0 457.6 L165.0 458.8 L180.0 457.2 L190.0 458.6 L200.0 459.0 L205.0 458.6 L213.5 451.6 L221.0 452.4 L230.0 456.4 L238.0 459.4 L250.0 458.4 L262.0 459.0 L267.0 457.8 L271.0 456.1 L281.0 456.1 L286.0 458.6 L300.0 458.7 L320.0 459.0 L333.0 459.4 L344.0 456.4 L353.0 453.8 L366.0 456.4 L376.0 456.0 L386.0 455.4 L394.0 458.4 L401.7 455.4 L410.0 459.4 L420.0 458.0 L430.0 458.4 L446.7 455.4 L455.0 457.0 L463.0 458.4 L473.0 457.6 L483.0 459.4 L492.0 456.8 L500.0 454.4 L508.0 456.0 L516.7 457.4 L523.0 455.8 L530.0 454.4 L538.0 457.4 L545.0 459.4 L553.0 456.4 L560.0 453.4 L568.0 455.4 L576.0 458.0 L583.5 459.4 L589.0 461.0 L593.0 458.0 L599.0 439.0 L601.5 452.0 L604.0 468.0 L607.5 492.0 L612.0 505.0 L617.2 515.8 L623.0 520.0 L628.7 523.0 L634.0 512.0 L640.0 498.5 L647.6 476.8 L651.0 464.0 L654.0 453.0 L657.0 440.0 L660.0 426.7 L664.0 431.0 L668.3 435.8 L676.0 446.0 L683.0 455.4 L690.0 456.4 L700.0 459.4 L712.0 456.0 L720.0 458.0 L730.0 458.8 L740.0 459.4 L750.0 488.0 L754.0 508.0 L758.4 530.0 L764.0 514.0 L771.0 493.0 L777.0 483.0 L782.0 475.0 L786.0 464.0 L789.0 455.0 L790.0 455.4 L800.0 456.4 L808.0 456.4 L814.0 458.4 L820.0 452.4 L825.0 448.8 L831.0 450.8 L838.0 452.8 L844.0 454.0 L850.0 455.4 L856.0 455.8 L862.0 456.0" stroke="#3030b0" stroke-width="1" fill="none" stroke-linejoin="bevel" shape-rendering="crispEdges"/>
<path d="M48.5 426.0 L55.0 454.0 L62.0 452.5 L67.0 455.0 L73.0 457.0 L85.0 458.0 L100.0 458.4 L110.0 457.4 L122.0 458.4 L140.0 458.0 L155.0 457.2 L165.0 458.4 L180.0 456.8 L190.0 458.2 L200.0 458.6 L205.0 458.2 L213.5 451.2 L221.0 452.0 L230.0 456.0 L238.0 459.0 L250.0 458.0 L262.0 458.6 L267.0 457.4 L271.0 455.7 L281.0 455.7 L286.0 458.2 L300.0 458.3 L320.0 458.6 L333.0 459.0 L344.0 456.0 L353.0 453.4 L366.0 456.0 L376.0 455.6 L386.0 455.0 L394.0 458.0 L394.0 458.3 L401.7 465.7 L410.0 459.3 L420.0 457.6 L430.0 458.0 L446.7 455.0 L455.0 456.6 L463.0 458.0 L473.0 457.2 L483.0 459.0 L492.0 456.4 L500.0 454.0 L508.0 455.6 L516.7 457.0 L523.0 455.4 L530.0 454.0 L538.0 457.0 L545.0 459.0 L553.0 456.0 L560.0 453.0 L568.0 455.0 L576.0 457.6 L583.5 459.0 L590.0 458.0 L595.0 455.0 L600.0 448.3 L608.3 426.7 L611.0 445.0 L614.0 463.0 L619.0 440.0 L624.0 420.0 L630.0 423.3 L638.3 437.5 L646.7 443.3 L651.7 458.0 L656.0 472.0 L661.6 486.6 L668.0 476.0 L674.0 466.0 L681.0 456.0 L683.0 455.0 L690.0 456.0 L700.0 459.0 L712.0 455.6 L720.0 457.6 L730.0 458.4 L740.0 459.0 L748.0 454.0 L755.0 449.4 L760.0 450.6 L766.0 452.0 L772.0 454.0 L778.0 456.0 L784.0 455.6 L790.0 455.0 L800.0 456.0 L808.0 456.0 L814.0 458.0 L820.0 452.0 L825.0 448.4 L831.0 450.4 L838.0 452.4 L844.0 453.6 L850.0 455.0 L856.0 455.4 L862.0 455.6" stroke="#00e8f0" stroke-width="1" fill="none" stroke-linejoin="bevel" shape-rendering="crispEdges"/>
<path d="M48.5 463.0 L55.0 454.0 L62.0 452.5 L67.0 455.0 L73.0 457.0 L85.0 458.0 L100.0 458.4 L110.0 457.4 L122.0 458.4 L140.0 458.0 L155.0 457.2 L165.0 458.4 L180.0 456.8 L190.0 458.2 L200.0 458.6 L205.0 458.2 L213.5 451.2 L221.0 452.0 L230.0 456.0 L238.0 459.0 L250.0 458.0 L262.0 458.6 L267.0 457.4 L271.0 455.7 L281.0 455.7 L286.0 458.2 L300.0 458.3 L320.0 458.6 L333.0 459.0 L344.0 456.0 L353.0 453.4 L366.0 456.0 L376.0 455.6 L386.0 455.0 L394.0 458.0 L401.7 455.0 L410.0 459.0 L420.0 457.6 L430.0 458.0 L446.7 455.0 L455.0 456.6 L463.0 458.0 L473.0 457.2 L483.0 459.0 L492.0 456.4 L500.0 454.0 L508.0 455.6 L516.7 457.0 L523.0 455.4 L530.0 454.0 L538.0 457.0 L545.0 459.0 L553.0 456.0 L560.0 453.0 L568.0 455.0 L576.0 457.6 L583.5 459.0 L590.0 458.0 L597.0 449.0 L603.0 430.0 L608.4 409.5 L610.2 440.0 L613.0 500.0 L616.0 563.5 L621.0 545.0 L626.0 526.6 L632.4 502.8 L640.0 487.6 L648.6 472.5 L651.9 461.7 L657.3 440.0 L660.8 421.7 L664.5 429.0 L668.3 435.8 L676.0 446.0 L683.0 455.0 L690.0 456.0 L700.0 459.0 L712.0 455.6 L720.0 457.6 L730.0 458.4 L740.0 459.0 L748.0 454.0 L755.0 449.4 L760.0 450.6 L766.0 452.0 L772.0 454.0 L778.0 456.0 L784.0 455.6 L790.0 455.0 L800.0 456.0 L808.0 456.0 L814.0 458.0 L820.0 452.0 L825.0 448.4 L831.0 450.4 L838.0 452.4 L844.0 453.6 L850.0 455.0 L856.0 455.4 L862.0 455.6" stroke="#ff00ff" stroke-width="1" fill="none" stroke-linejoin="bevel" shape-rendering="crispEdges"/>
<path d="M48.5 460.0 L55.0 454.0 L62.0 452.5 L67.0 455.0 L73.0 457.0 L85.0 458.0 L100.0 458.4 L110.0 457.4 L122.0 458.4 L140.0 458.0 L155.0 457.2 L165.0 458.4 L180.0 456.8 L190.0 458.2 L200.0 460.7 L205.0 460.4 L212.0 456.0 L221.0 452.2 L230.0 456.0 L238.0 459.0 L250.0 458.0 L262.0 458.6 L267.0 457.4 L271.0 455.7 L281.0 455.7 L286.0 458.2 L300.0 458.3 L320.0 458.6 L333.0 459.0 L344.0 456.0 L353.0 453.4 L366.0 456.0 L376.0 455.6 L386.0 455.0 L394.0 458.0 L401.7 455.0 L410.0 459.0 L420.0 457.6 L430.0 458.0 L446.7 455.0 L455.0 456.6 L463.0 458.0 L473.0 457.2 L483.0 459.0 L492.0 456.4 L500.0 454.0 L508.0 455.6 L516.7 457.0 L523.0 455.4 L530.0 454.0 L538.0 457.0 L545.0 459.0 L553.0 456.0 L560.0 453.0 L568.0 455.0 L576.0 457.6 L583.5 459.0 L588.0 457.0 L595.0 452.0 L600.0 447.0 L604.0 440.0 L610.7 440.0 L615.0 472.5 L621.6 450.8 L625.0 425.0 L630.0 432.0 L636.7 440.8 L641.6 444.0 L646.6 443.4 L649.7 483.0 L654.0 511.5 L662.7 541.8 L669.0 524.0 L676.8 502.8 L682.0 492.0 L687.6 481.0 L690.0 477.0 L697.0 462.0 L704.0 459.0 L712.0 455.6 L720.0 457.6 L730.0 458.4 L740.0 459.0 L748.0 454.0 L755.0 449.4 L760.0 450.6 L766.0 452.0 L772.0 454.0 L778.0 456.0 L784.0 455.6 L790.0 455.0 L800.0 456.0 L808.0 456.0 L814.0 458.0 L820.0 452.0 L825.0 448.4 L831.0 450.4 L838.0 452.4 L844.0 453.6 L850.0 455.0 L856.0 455.4 L862.0 455.6" stroke="#808000" stroke-width="1" fill="none" stroke-linejoin="bevel" shape-rendering="crispEdges"/>
<path d="M48.5 458.0 L55.0 454.0 L62.0 452.5 L67.0 455.0 L73.0 457.0 L85.0 458.0 L100.0 458.4 L110.0 457.4 L122.0 458.4 L140.0 458.0 L155.0 457.2 L165.0 458.4 L180.0 456.8 L190.0 458.2 L200.0 458.6 L205.0 458.2 L213.5 451.2 L221.0 452.0 L230.0 456.0 L238.0 459.0 L250.0 458.0 L262.0 458.6 L267.0 457.4 L271.0 455.7 L281.0 455.7 L286.0 458.2 L300.0 458.3 L320.0 458.6 L333.0 459.0 L344.0 456.0 L353.0 453.4 L366.0 456.0 L376.0 455.6 L386.0 455.0 L394.0 458.0 L401.7 455.0 L410.0 459.0 L420.0 457.6 L430.0 458.0 L446.7 455.0 L455.0 456.6 L463.0 458.0 L473.0 457.2 L483.0 459.0 L492.0 456.4 L500.0 454.0 L508.0 455.6 L516.7 457.0 L523.0 455.4 L530.0 454.0 L538.0 457.0 L545.0 459.0 L553.0 456.0 L560.0 453.0 L568.0 455.0 L576.0 457.6 L583.5 459.0 L588.0 459.5 L603.0 474.6 L611.8 502.8 L619.4 533.0 L626.0 530.0 L632.4 526.6 L638.0 514.0 L644.3 500.6 L649.7 481.0 L653.0 466.0 L656.0 451.0 L659.0 442.0 L662.5 435.0 L668.3 436.7 L676.0 446.0 L683.0 455.0 L690.0 456.0 L700.0 459.0 L712.0 455.6 L720.0 457.6 L730.0 458.4 L740.0 459.0 L748.0 454.0 L755.0 449.4 L760.0 450.6 L766.0 452.0 L772.0 454.0 L778.0 456.0 L784.0 455.6 L790.0 455.0 L800.0 456.0 L808.0 456.0 L814.0 458.0 L820.0 452.0 L825.0 448.4 L831.0 450.4 L838.0 452.4 L844.0 453.6 L850.0 455.0 L856.0 455.4 L862.0 455.6" stroke="#b07838" stroke-width="1" fill="none" stroke-linejoin="bevel" shape-rendering="crispEdges"/>
<path d="M48.5 459.0 L55.0 454.0 L62.0 452.5 L67.0 455.0 L73.0 457.0 L85.0 458.0 L100.0 458.4 L110.0 457.4 L122.0 458.4 L140.0 458.0 L155.0 457.2 L165.0 458.4 L180.0 456.8 L190.0 458.2 L200.0 458.6 L205.0 458.2 L213.5 451.2 L221.0 452.0 L230.0 456.0 L238.0 459.0 L250.0 458.0 L262.0 458.6 L267.0 457.4 L271.0 455.7 L281.0 455.7 L286.0 458.2 L300.0 458.3 L320.0 458.6 L333.0 459.0 L344.0 456.0 L353.0 453.4 L366.0 456.0 L376.0 455.6 L386.0 455.0 L394.0 458.0 L401.7 455.0 L410.0 459.0 L420.0 457.6 L430.0 458.0 L446.7 455.0 L455.0 456.6 L463.0 458.0 L473.0 457.2 L483.0 459.0 L492.0 456.4 L500.0 454.0 L508.0 455.6 L516.7 457.0 L523.0 455.4 L530.0 454.0 L538.0 457.0 L545.0 459.0 L553.0 456.0 L560.0 453.0 L568.0 455.0 L576.0 457.6 L583.5 459.0 L590.0 457.0 L600.0 448.0 L606.0 452.0 L611.0 448.0 L616.0 430.0 L620.8 401.7 L625.0 374.0 L630.8 403.0 L636.7 423.0 L645.0 435.0 L647.5 440.0 L652.0 427.0 L656.7 413.3 L661.0 420.0 L665.8 428.0 L670.0 437.0 L676.0 446.0 L683.0 455.0 L690.0 456.0 L700.0 459.0 L712.0 455.6 L720.0 457.6 L730.0 458.4 L740.0 459.0 L748.0 454.0 L755.0 449.4 L760.0 450.6 L766.0 452.0 L772.0 454.0 L778.0 456.0 L784.0 455.6 L790.0 455.0 L800.0 456.0 L808.0 456.0 L814.0 458.0 L820.0 452.0 L825.0 448.4 L831.0 450.4 L838.0 452.4 L844.0 453.6 L850.0 455.0 L856.0 455.4 L862.0 455.6" stroke="#808000" stroke-width="1" fill="none" stroke-linejoin="bevel" shape-rendering="crispEdges"/>
<path d="M48.5 437.0 L55.0 454.0 L62.0 452.5 L67.0 455.0 L73.0 457.0 L85.0 458.0 L100.0 458.4 L110.0 457.4 L122.0 458.4 L140.0 458.0 L155.0 457.2 L165.0 458.4 L180.0 456.8 L190.0 458.2 L200.0 458.6 L205.0 458.2 L213.5 451.2 L221.0 452.0 L230.0 456.0 L238.0 459.0 L250.0 458.0 L262.0 458.6 L267.0 457.4 L271.0 455.7 L281.0 455.7 L286.0 458.2 L300.0 458.3 L320.0 458.6 L333.0 459.0 L344.0 456.0 L353.0 453.4 L366.0 456.0 L376.0 455.6 L386.0 455.0 L394.0 458.0 L401.7 455.0 L410.0 459.0 L420.0 457.6 L430.0 458.0 L446.7 455.0 L455.0 456.6 L463.0 458.0 L473.0 457.2 L483.0 459.0 L492.0 456.4 L500.0 454.0 L508.0 455.6 L516.7 457.0 L523.0 455.4 L530.0 454.0 L538.0 457.0 L545.0 459.0 L553.0 456.0 L560.0 453.0 L568.0 455.0 L576.0 457.6 L583.5 459.0 L585.5 475.0 L591.7 526.0 L597.0 498.0 L603.0 468.0 L610.7 453.0 L615.0 432.0 L620.0 410.0 L627.5 388.5 L632.0 405.0 L640.0 425.0 L647.0 442.0 L651.0 432.0 L655.0 422.0 L661.0 418.0 L666.0 430.0 L670.0 437.0 L676.0 446.0 L683.0 455.0 L690.0 456.0 L700.0 459.0 L712.0 455.6 L720.0 457.6 L730.0 458.4 L740.0 459.0 L748.0 454.0 L755.0 449.4 L760.0 450.6 L766.0 452.0 L772.0 454.0 L778.0 456.0 L784.0 455.6 L790.0 455.0 L800.0 456.0 L808.0 456.0 L814.0 458.0 L820.0 452.0 L825.0 448.4 L831.0 450.4 L838.0 452.4 L844.0 453.6 L850.0 455.0 L856.0 455.4 L862.0 455.6" stroke="#111111" stroke-width="1" fill="none" stroke-linejoin="bevel" shape-rendering="crispEdges"/>
<path d="M48.5 465.0 L55.0 454.0 L62.0 452.5 L67.0 455.0 L73.0 457.0 L85.0 458.0 L100.0 458.4 L110.0 457.4 L122.0 458.4 L140.0 458.0 L155.0 457.2 L165.0 458.4 L180.0 456.8 L190.0 458.2 L200.0 458.6 L205.0 458.2 L213.5 451.2 L221.0 452.0 L230.0 456.0 L238.0 459.0 L250.0 458.0 L262.0 458.6 L267.0 457.4 L271.0 455.7 L281.0 455.7 L286.0 458.2 L300.0 458.3 L320.0 458.6 L333.0 459.0 L344.0 456.0 L353.0 453.4 L366.0 456.0 L376.0 455.6 L386.0 455.0 L394.0 458.0 L401.7 455.0 L410.0 459.0 L420.0 457.6 L430.0 458.0 L446.7 455.0 L455.0 456.6 L463.0 458.0 L473.0 457.2 L483.0 459.0 L492.0 456.4 L500.0 454.0 L508.0 455.6 L516.7 457.0 L523.0 455.4 L530.0 454.0 L538.0 457.0 L545.0 459.0 L553.0 456.0 L560.0 453.0 L568.0 455.0 L576.0 457.6 L583.5 459.0 L585.0 459.2 L591.7 457.5 L597.0 447.0 L600.0 438.3 L604.0 424.0 L608.3 408.3 L610.5 432.0 L612.5 456.7 L615.0 470.0 L619.5 440.0 L624.2 413.3 L630.0 421.7 L638.3 436.7 L646.7 441.7 L650.0 463.0 L655.0 474.0 L661.6 486.6 L668.0 476.0 L674.0 466.0 L681.0 456.0 L683.0 455.0 L690.0 456.0 L700.0 459.0 L712.0 455.6 L720.0 457.6 L730.0 458.4 L740.0 459.0 L748.0 454.0 L755.0 449.4 L760.0 450.6 L766.0 452.0 L772.0 454.0 L778.0 456.0 L784.0 455.6 L790.0 455.0 L800.0 456.0 L808.0 456.0 L814.0 458.0 L820.0 452.0 L825.0 448.4 L831.0 450.4 L838.0 452.4 L844.0 453.6 L850.0 455.0 L856.0 455.4 L862.0 455.6" stroke="#8000c8" stroke-width="1" fill="none" stroke-linejoin="bevel" shape-rendering="crispEdges"/>
<path d="M48.1 238.2V568 M43 564.1H865.6 M47.5 238.7H865.6 M865 238.2V568" stroke="#1e1e1e" stroke-width="1.2" fill="none"/>
<path d="M43 238.7H48 M43 264.1H48 M43 287.1H48 M43 310.2H48 M43 333.3H48 M43 356.4H48 M43 379.5H48 M43 402.5H48 M43 425.6H48 M43 448.7H48 M43 471.8H48 M43 494.9H48 M43 517.9H48 M43 541.0H48 M43 564.1H48 M142.8 564V568 M237.9 564V568 M332.9 564V568 M427.9 564V568 M522.9 564V568 M618.0 564V568 M713.0 564V568 M808.0 564V568" stroke="#2a2a2a" stroke-width="1.2" fill="none"/>
<g font-size="9.4" fill="#1a1a1a" font-family="Liberation Sans, sans-serif">
<text x="6.8" y="242.0" textLength="30.6">186.70</text>
<text x="6.8" y="267.4" textLength="30.6">176.00</text>
<text x="6.8" y="290.4" textLength="30.6">166.00</text>
<text x="6.8" y="313.5" textLength="30.6">156.00</text>
<text x="6.8" y="336.6" textLength="30.6">146.00</text>
<text x="6.8" y="359.7" textLength="30.6">136.00</text>
<text x="6.8" y="382.8" textLength="30.6">126.00</text>
<text x="6.8" y="405.8" textLength="30.6">116.00</text>
<text x="6.8" y="428.9" textLength="30.6">106.00</text>
<text x="11.9" y="452.0" textLength="25.5">96.00</text>
<text x="11.9" y="475.1" textLength="25.5">86.00</text>
<text x="11.9" y="498.2" textLength="25.5">76.00</text>
<text x="11.9" y="521.2" textLength="25.5">66.00</text>
<text x="11.9" y="544.3" textLength="25.5">56.00</text>
<text x="11.9" y="567.4" textLength="25.5">46.00</text>
</g>
<g font-size="9.8" fill="#2a2a33" font-family="Liberation Sans, sans-serif">
<text x="28.7" y="576.5" textLength="36.800">0:00:00</text>
<text x="123.7" y="576.5" textLength="36.800">0:00:10</text>
<text x="218.8" y="576.5" textLength="36.800">0:00:20</text>
<text x="313.8" y="576.5" textLength="36.800">0:00:30</text>
<text x="408.8" y="576.5" textLength="36.800">0:00:40</text>
<text x="503.8" y="576.5" textLength="36.800">0:00:50</text>
<text x="598.9" y="576.5" textLength="36.800">0:01:00</text>
<text x="693.9" y="576.5" textLength="36.800">0:01:10</text>
<text x="788.9" y="576.5" textLength="36.800">0:01:20</text>
<text x="846.0" y="576.5" textLength="36.800">0:01:26</text>
</g>
<text x="455.5" y="594.4" font-size="11" fill="#111" text-anchor="middle" letter-spacing="-0.4">Elapsed time (h:mm:ss)</text>
<text y="227.500" font-size="14.650" fill="#1c1c2e"><tspan x="-6.300">T</tspan><tspan x="5.100">hroughput</tspan></text>
<text transform="translate(3.8 414) rotate(-90)" font-size="10.500" fill="#111" letter-spacing="-0.3">Mbps</text>
</svg>
<!--CHART-END-->
</body>
</html>
